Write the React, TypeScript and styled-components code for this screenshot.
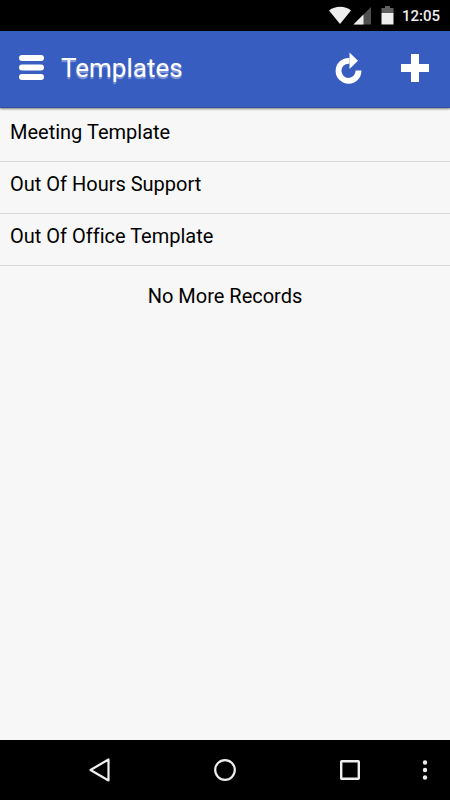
import styled, { createGlobalStyle } from "styled-components";

const templates = [
  "Meeting Template",
  "Out Of Hours Support",
  "Out Of Office Template",
];

export default function App() {
  return (
    <Screen>
      <GlobalStyle />
      <StatusBar>
        <svg width="66" height="20" viewBox="0 0 66 20" aria-hidden="true">
          <path d="M0 4.5C6.5 -0.5 16 -0.5 22 4.5L11 18Z" fill="#eee" />
          <path d="M42 1V18.500H24.500Z" fill="#505050" />
          <path d="M34.500 8.500V18.500H24.500Z" fill="#eee" />
          <path d="M56 0H61V2H64.500V7H52.500V2H56Z" fill="#606060" />
          <path d="M52.500 7H64.500V18.500H52.500Z" fill="#eee" />
        </svg>
        <Time>12:05</Time>
      </StatusBar>

      <Header>
        <IconButton aria-label="Menu">
          <svg width="26" height="26" viewBox="0 0 26 26" fill="#fff">
            <rect x="1" y="0" width="25" height="6" rx="3" />
            <rect x="1" y="9.500" width="25" height="6" rx="3" />
            <rect x="1" y="19" width="25" height="6" rx="3" />
          </svg>
        </IconButton>
        <Title>Templates</Title>
        <Actions>
          <IconButton aria-label="Refresh">
            <svg width="28" height="32" viewBox="0 0 28 32">
              <path
                d="M15.500 8.800H14.500A10 10 0 1 0 24.500 18.500"
                fill="none"
                stroke="#fff"
                strokeWidth="5.800"
              />
              <path d="M15.500 0.500L24 8.800L15.500 17Z" fill="#fff" />
            </svg>
          </IconButton>
          <IconButton aria-label="Add template">
            <svg width="28" height="28" viewBox="0 0 28 28">
              <path
                d="M10 0H18V10H28V18H18V28H10V18H0V10H10Z"
                fill="#fff"
              />
            </svg>
          </IconButton>
        </Actions>
      </Header>

      <Main>
        <TemplateList>
          {templates.map((name) => (
            <TemplateItem key={name}>
              <TemplateLink href="#">{name}</TemplateLink>
            </TemplateItem>
          ))}
        </TemplateList>
        <EndText>No More Records</EndText>
      </Main>

      <NavBar>
        <NavButton aria-label="Back" $column={2}>
          <svg width="24" height="24" viewBox="0 0 24 24">
            <path
              d="M20.500 1.500V22.500L2.500 12Z"
              fill="none"
              stroke="#eee"
              strokeWidth="2.200"
              strokeLinejoin="round"
            />
          </svg>
        </NavButton>
        <NavButton aria-label="Home" $column={3}>
          <svg width="24" height="24" viewBox="0 0 24 24">
            <circle
              cx="12"
              cy="12"
              r="9.800"
              fill="none"
              stroke="#eee"
              strokeWidth="2.200"
            />
          </svg>
        </NavButton>
        <NavButton aria-label="Recent apps" $column={4}>
          <svg width="24" height="24" viewBox="0 0 24 24">
            <rect
              x="3.200"
              y="3.200"
              width="17.600"
              height="17.600"
              rx="0.500"
              fill="none"
              stroke="#eee"
              strokeWidth="2.400"
            />
          </svg>
        </NavButton>
        <NavButton aria-label="More options" $column={5}>
          <svg width="24" height="24" viewBox="0 0 24 24" fill="#eee">
            <circle cx="12" cy="4.500" r="2.200" />
            <circle cx="12" cy="12" r="2.200" />
            <circle cx="12" cy="19.500" r="2.200" />
          </svg>
        </NavButton>
      </NavBar>
    </Screen>
  );
}

const GlobalStyle = createGlobalStyle`
  * {
    box-sizing: border-box;
  }

  body {
    margin: 0;
    background: #f7f7f7;
    font-family: Roboto, "Liberation Sans", sans-serif;
    font-variant-ligatures: none;
  }
`;

const Screen = styled.div`
  display: flex;
  flex-direction: column;
  min-height: 100vh;
`;

const StatusBar = styled.div`
  display: flex;
  align-items: center;
  justify-content: flex-end;
  gap: 7px;
  height: 31px;
  padding-right: 10px;
  background: #000000;
`;

const Time = styled.time`
  color: #eeeeee;
  font-size: 15px;
  font-weight: 500;
  line-height: 20px;
`;

const Header = styled.header`
  display: flex;
  align-items: center;
  height: 77px;
  padding: 0 17px 2px;
  background: #375dc1;
  border-bottom: 1px solid #3450a0;
  box-shadow: 0 1px 2px rgba(0, 0, 0, 0.5);
`;

const IconButton = styled.button`
  display: flex;
  align-items: center;
  justify-content: center;
  min-width: 28px;
  height: 40px;
  padding: 0;
  border: none;
  background: none;
  cursor: pointer;
`;

const Title = styled.h1`
  flex: 1;
  margin: 0 0 0 16px;
  color: #ffffff;
  font-size: 26px;
  font-weight: 400;
  line-height: 32px;
  text-shadow: 0 2px 1px rgba(255, 255, 255, 0.4);
`;

const Actions = styled.div`
  display: flex;
  align-items: center;
  gap: 39px;
  padding-right: 4px;
`;

const Main = styled.main`
  flex: 1;
  padding-top: 2px;
`;

const TemplateList = styled.ul`
  margin: 0;
  padding: 0;
  list-style: none;
`;

const TemplateItem = styled.li`
  border-bottom: 1px solid #d8d8d8;
`;

const TemplateLink = styled.a`
  display: block;
  padding: 10px 10px 17px;
  color: #000000;
  font-size: 20px;
  line-height: 24px;
  text-decoration: none;
`;

const EndText = styled.p`
  margin: 18px 0 0;
  color: #000000;
  font-size: 20px;
  line-height: 24px;
  text-align: center;
`;

const NavBar = styled.nav`
  display: grid;
  grid-template-columns: 3fr 10fr 10fr 10fr 2fr 1fr;
  height: 60px;
  background: #000000;
`;

const NavButton = styled.button<{ $column: number }>`
  grid-column: ${({ $column }) => $column};
  display: flex;
  align-items: center;
  justify-content: center;
  padding: 0;
  border: none;
  background: none;
  cursor: pointer;
`;
